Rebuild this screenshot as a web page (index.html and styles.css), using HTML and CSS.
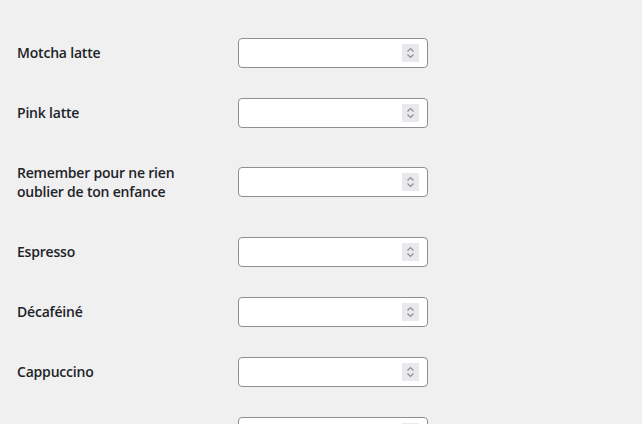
FILE: index.html
```html
<!DOCTYPE html>
<html lang="fr">
<head>
<meta charset="utf-8">
<title>Form</title>
<link rel="stylesheet" href="styles.css">
</head>
<body>
<div class="wrap">
<table class="form-table">
  <tbody>
    <tr><th><label>Motcha latte</label></th><td><span class="num"><input type="text"><span class="spin"><svg viewBox="0 0 17 18" width="17" height="18"><path d="M5.5 7.5 8.5 4.5 11.5 7.5M5.5 10.5 8.5 13.5 11.5 10.5" fill="none" stroke="#8c8f94" stroke-width="1.2"/></svg></span></span></td></tr>
    <tr><th><label>Pink latte</label></th><td><span class="num"><input type="text"><span class="spin"><svg viewBox="0 0 17 18" width="17" height="18"><path d="M5.5 7.5 8.5 4.5 11.5 7.5M5.5 10.5 8.5 13.5 11.5 10.5" fill="none" stroke="#8c8f94" stroke-width="1.2"/></svg></span></span></td></tr>
    <tr><th><label>Remember pour ne rien oublier de ton enfance</label></th><td><span class="num"><input type="text"><span class="spin"><svg viewBox="0 0 17 18" width="17" height="18"><path d="M5.5 7.5 8.5 4.5 11.5 7.5M5.5 10.5 8.5 13.5 11.5 10.5" fill="none" stroke="#8c8f94" stroke-width="1.2"/></svg></span></span></td></tr>
    <tr><th><label>Espresso</label></th><td><span class="num"><input type="text"><span class="spin"><svg viewBox="0 0 17 18" width="17" height="18"><path d="M5.5 7.5 8.5 4.5 11.5 7.5M5.5 10.5 8.5 13.5 11.5 10.5" fill="none" stroke="#8c8f94" stroke-width="1.2"/></svg></span></span></td></tr>
    <tr><th><label>Décaféiné</label></th><td><span class="num"><input type="text"><span class="spin"><svg viewBox="0 0 17 18" width="17" height="18"><path d="M5.5 7.5 8.5 4.5 11.5 7.5M5.5 10.5 8.5 13.5 11.5 10.5" fill="none" stroke="#8c8f94" stroke-width="1.2"/></svg></span></span></td></tr>
    <tr><th><label>Cappuccino</label></th><td><span class="num"><input type="text"><span class="spin"><svg viewBox="0 0 17 18" width="17" height="18"><path d="M5.5 7.5 8.5 4.5 11.5 7.5M5.5 10.5 8.5 13.5 11.5 10.5" fill="none" stroke="#8c8f94" stroke-width="1.2"/></svg></span></span></td></tr>
    <tr><th></th><td><span class="num"><input type="text"><span class="spin"><svg viewBox="0 0 17 18" width="17" height="18"><path d="M5.5 7.5 8.5 4.5 11.5 7.5M5.5 10.5 8.5 13.5 11.5 10.5" fill="none" stroke="#8c8f94" stroke-width="1.2"/></svg></span></span></td></tr>
  </tbody>
</table>
</div>
</body>
</html>
```
FILE: styles.css
```css
html, body {
  margin: 0;
  padding: 0;
  background: #f0f0f1;
  overflow: hidden;
}
body {
  font-family: "Open Sans", "Noto Sans", sans-serif;
  font-size: 14px;
  color: #1d2327;
}
.wrap {
  padding: 23px 0 0 17px;
}
.form-table {
  border-collapse: collapse;
}
.form-table th {
  width: 200px;
  padding: 20px 10px 20px 0;
  text-align: left;
  vertical-align: top;
  font-weight: 600;
  line-height: 19.4px;
  letter-spacing: -0.2px;
}
.form-table th label {
  display: block;
  width: 172px;
}
.form-table td {
  padding: 15px 10px 15px 11px;
  vertical-align: middle;
}
.num {
  display: flex;
  align-items: center;
  box-sizing: border-box;
  width: 190px;
  height: 30px;
  background: #fff;
  border: 1px solid #8c8f94;
  border-radius: 4px;
  padding: 0 8px 0 8px;
}
.num input {
  flex: 1;
  min-width: 0;
  border: 0;
  outline: 0;
  padding: 0;
  background: transparent;
  font: inherit;
}
.spin {
  display: flex;
  width: 17px;
  height: 18px;
  background: #e9e9ed;
}
.spin svg {
  display: block;
}
```
